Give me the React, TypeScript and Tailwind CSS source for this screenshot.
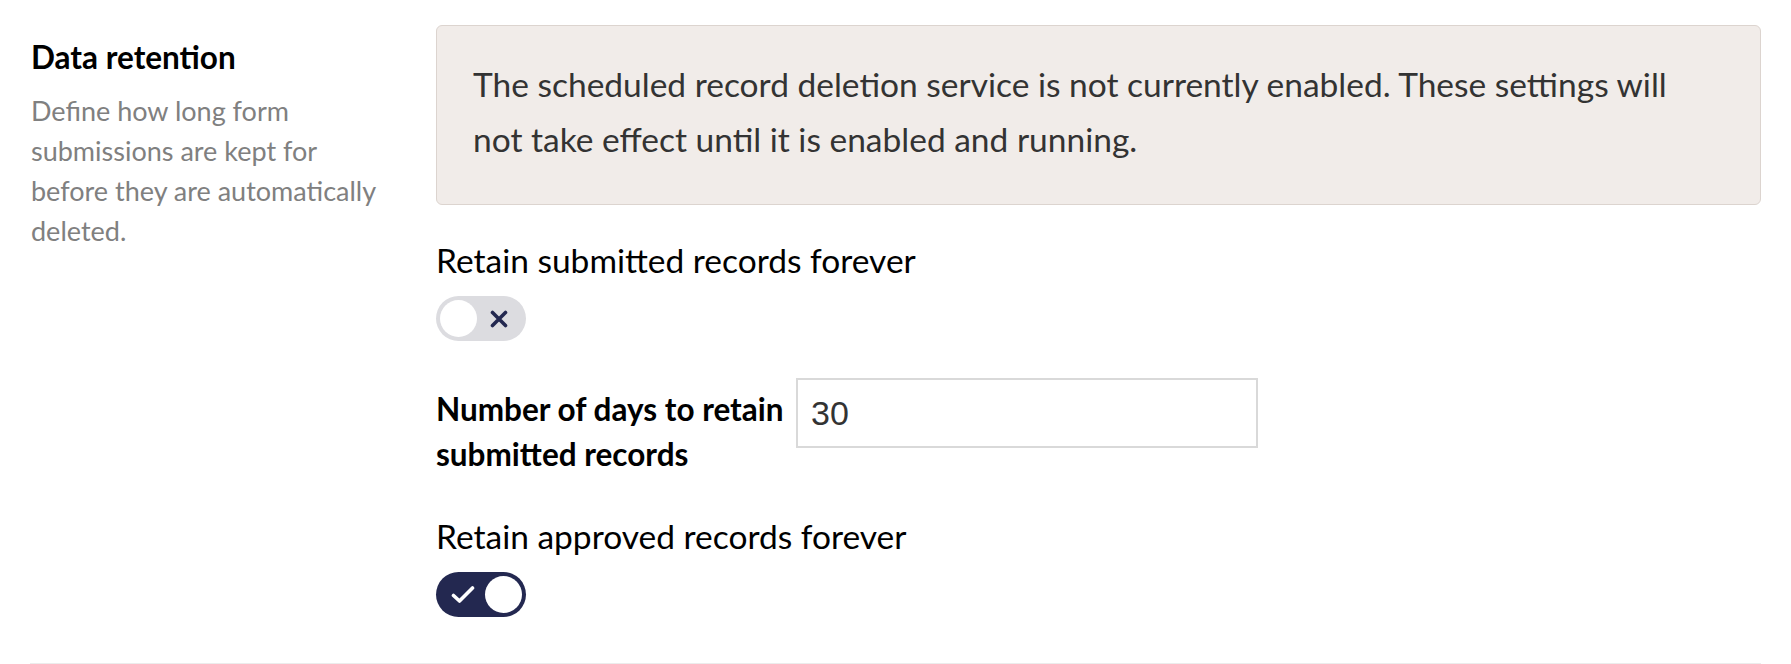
import React, { useState } from 'react';

const Toggle: React.FC<{ checked: boolean; onChange: () => void }> = ({ checked, onChange }) => (
  <button
    type="button"
    onClick={onChange}
    className={`relative flex h-[45px] w-[90px] items-center rounded-full ${checked ? 'bg-[#232850]' : 'bg-[#dcdce0]'}`}
  >
    {checked ? (
      <>
        <svg className="absolute left-[15px] top-[13px]" width="24" height="19" viewBox="0 0 24 19" fill="none">
          <path d="M2.5 10.5 L8.5 16 L21.5 3" stroke="#ffffff" strokeWidth="3.6" strokeLinecap="round" strokeLinejoin="round" />
        </svg>
        <span className="absolute right-[4px] top-[4px] h-[37px] w-[37px] rounded-full bg-white" />
      </>
    ) : (
      <>
        <span className="absolute left-[4px] top-[4px] h-[37px] w-[37px] rounded-full bg-white" />
        <svg className="absolute left-[54px] top-[14px]" width="18" height="18" viewBox="0 0 18 18" fill="none">
          <path d="M2.5 2.5 L15.5 15.5 M15.5 2.5 L2.5 15.5" stroke="#232850" strokeWidth="3.6" strokeLinecap="round" />
        </svg>
      </>
    )}
  </button>
);

export default function App() {
  const [keepSubmitted, setKeepSubmitted] = useState(false);
  const [keepApproved, setKeepApproved] = useState(true);
  const [days, setDays] = useState('30');

  return (
    <div className="min-h-screen bg-white font-['Lato','Liberation_Sans',sans-serif] text-black">
      <div className="mx-[30px] flex gap-[51px] border-b border-[#ececec] pt-[25px] pb-[46px]">
        {/* Section description */}
        <div className="w-[355px] shrink-0 pt-[12px] pl-[1px]">
          <h2 className="text-[31.5px] font-bold leading-[40px]">Data retention</h2>
          <p className="mt-[14px] text-[27px] leading-[40px] text-[#808080]">
            Define how long form submissions are kept for before they are automatically deleted.
          </p>
        </div>

        {/* Settings */}
        <div className="flex-1">
          <div className="rounded-[6px] border-[1.5px] border-[#dcd4cf] bg-[#f1ece9] pl-[36px] pr-[44px] pt-[31px] pb-[37px] text-[33.5px] leading-[55px] text-[#333333]">
            The scheduled record deletion service is not currently enabled. These settings will not take effect until it is enabled and running.
          </div>

          <div className="mt-[31px] text-[33.5px] leading-[48px]">Retain submitted records forever</div>
          <div className="mt-[12px]">
            <Toggle checked={keepSubmitted} onChange={() => setKeepSubmitted(v => !v)} />
          </div>

          <div className="mt-[37px] flex items-start">
            <label htmlFor="days" className="w-[360px] shrink-0 pt-[9px] text-[31.5px] font-bold leading-[45px]">
              Number of days to retain submitted records
            </label>
            <input
              id="days"
              type="text"
              value={days}
              onChange={e => setDays(e.target.value)}
              className="h-[70px] w-[462px] border-2 border-[#d9d9d9] bg-white px-[13px] font-['Liberation_Sans',Arial,sans-serif] text-[34px] text-[#333333] outline-none"
            />
          </div>

          <div className="mt-[35px] text-[33.5px] leading-[48px]">Retain approved records forever</div>
          <div className="mt-[12px]">
            <Toggle checked={keepApproved} onChange={() => setKeepApproved(v => !v)} />
          </div>
        </div>
      </div>
    </div>
  );
}
